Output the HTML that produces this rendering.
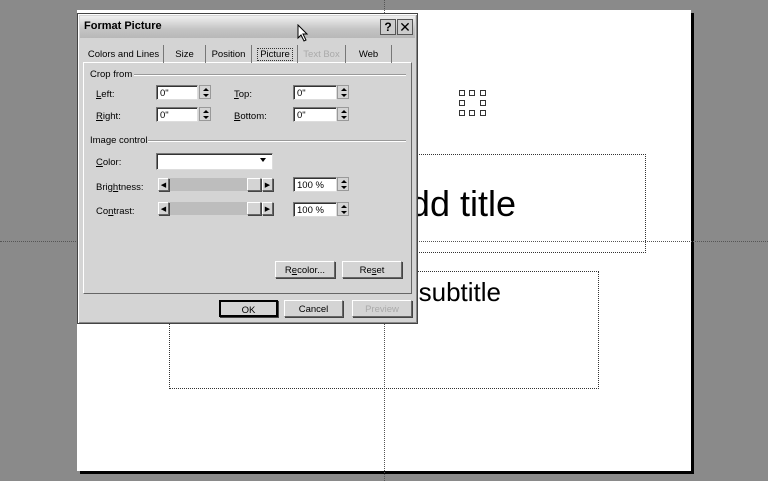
<!DOCTYPE html>
<html><head><style>
*{margin:0;padding:0;box-sizing:border-box}
body{width:768px;height:481px;background:#8a8a8a;position:relative;overflow:hidden;font-family:"Liberation Sans",sans-serif;font-size:9.5px;color:#000}
.a{position:absolute}
.hd{border-top:1px dotted #555}
.vd{border-left:1px dotted #555}
.box{border:1px dotted #333}
.h{position:absolute;width:6px;height:6px;border:1px solid #333;background:#fff}
.dlg{left:77px;top:13px;width:341px;height:311px;background:#d4d4d4;border:1px solid #444;box-shadow:inset 1px 1px #fff,inset -1px -1px #888}
.inp{background:#fff;border:1px solid #777;border-right-color:#ddd;border-bottom-color:#ddd;box-shadow:inset 1px 1px #333;height:15px;padding:2px 0 0 3px;font-size:9.5px}
.spin{width:12px;height:14px;background:#d4d4d4;border:1px solid #999}
.spin:before{content:"";position:absolute;left:3px;top:2px;border:3px solid transparent;border-bottom:3px solid #000;border-top:0}
.spin:after{content:"";position:absolute;left:3px;top:8px;border:3px solid transparent;border-top:3px solid #000;border-bottom:0}
.btn{background:#d4d4d4;border:1px solid #666;border-top-color:#fff;border-left-color:#fff;box-shadow:1px 1px #444;text-align:center;padding-top:3px;font-size:9.5px}
.tab{top:31px;height:18px;padding-top:4px;text-align:center;border-right:1px solid #777;font-size:9.5px}
</style></head><body>
<div class="a" style="left:80px;top:13px;width:614px;height:461px;background:#000"></div>
<div class="a" style="left:77px;top:10px;width:614px;height:461px;background:#fff"></div>
<div class="a hd" style="left:0;top:241px;width:768px"></div>
<div class="a vd" style="left:384px;top:0;height:481px"></div>
<div class="a box" style="left:385px;top:154px;width:261px;height:99px"></div>
<div class="a box" style="left:169px;top:271px;width:430px;height:118px"></div>
<div class="a" style="right:252px;top:183px;font-size:36px;line-height:42px;white-space:nowrap">Click to add title</div>
<div class="a" style="right:267px;top:277px;font-size:26px;line-height:30px;white-space:nowrap">Click to add subtitle</div>
<div class="h" style="left:459px;top:90px"></div><div class="h" style="left:469px;top:90px"></div><div class="h" style="left:480px;top:90px"></div>
<div class="h" style="left:459px;top:100px"></div><div class="h" style="left:480px;top:100px"></div>
<div class="h" style="left:459px;top:110px"></div><div class="h" style="left:469px;top:110px"></div><div class="h" style="left:480px;top:110px"></div>

<div class="a dlg">
 <div class="a" style="left:2px;top:2px;width:335px;height:22px;background:linear-gradient(#f0f0f0,#c4c4c4 60%,#b8b8b8)"></div>
 <div class="a" style="left:6px;top:6px;font-weight:bold;font-size:11px">Format Picture</div>
 <div class="a" style="left:302px;top:5px;width:16px;height:16px;background:#ccc;border:1px solid #555;text-align:center;font-weight:bold;font-size:12px;line-height:14px">?</div>
 <div class="a" style="left:319px;top:5px;width:16px;height:16px;background:#ccc;border:1px solid #555;text-align:center;font-size:14px;line-height:14px">✕</div>
 <div class="a" style="left:5px;top:48px;width:329px;height:232px;border:1px solid #fff;border-right-color:#666;border-bottom-color:#666"></div>
 <div class="a tab" style="left:6px;width:80px">Colors and Lines</div>
 <div class="a tab" style="left:86px;width:42px">Size</div>
 <div class="a tab" style="left:128px;width:46px">Position</div>
 <div class="a tab" style="left:175px;width:45px"><span style="border:1px dotted #333;padding:0 2px">Picture</span></div>
 <div class="a tab" style="left:220px;width:48px;color:#aaa">Text Box</div>
 <div class="a tab" style="left:268px;width:46px">Web</div>
 <div class="a" style="left:12px;top:55px">Crop from</div>
 <div class="a" style="left:56px;top:60px;width:272px;border-top:1px solid #999;border-bottom:1px solid #fff"></div>
 <div class="a" style="left:18px;top:75px"><u>L</u>eft:</div>
 <div class="a inp" style="left:78px;top:71px;width:42px">0"</div><div class="a spin" style="left:121px;top:71px"></div>
 <div class="a" style="left:156px;top:75px"><u>T</u>op:</div>
 <div class="a inp" style="left:215px;top:71px;width:44px">0"</div><div class="a spin" style="left:259px;top:71px"></div>
 <div class="a" style="left:18px;top:97px"><u>R</u>ight:</div>
 <div class="a inp" style="left:78px;top:93px;width:42px">0"</div><div class="a spin" style="left:121px;top:93px"></div>
 <div class="a" style="left:156px;top:97px"><u>B</u>ottom:</div>
 <div class="a inp" style="left:215px;top:93px;width:44px">0"</div><div class="a spin" style="left:259px;top:93px"></div>
 <div class="a" style="left:12px;top:121px">Image control</div>
 <div class="a" style="left:70px;top:126px;width:258px;border-top:1px solid #999;border-bottom:1px solid #fff"></div>
 <div class="a" style="left:18px;top:143px"><u>C</u>olor:</div>
 <div class="a inp" style="left:78px;top:139px;width:117px;height:17px"></div>
 <div class="a" style="left:182px;top:144px;border:3px solid transparent;border-top:4px solid #000"></div>
 <div class="a" style="left:18px;top:168px">Brig<u>h</u>tness:</div>
 <div class="a" style="left:80px;top:164px;width:116px;height:13px;background:#bdbdbd"></div>
 <div class="a btn" style="left:80px;top:164px;width:11px;height:13px;font-size:7px;padding-top:2px">◀</div>
 <div class="a btn" style="left:169px;top:164px;width:14px;height:13px"></div>
 <div class="a btn" style="left:184px;top:164px;width:11px;height:13px;font-size:7px;padding-top:2px">▶</div>
 <div class="a inp" style="left:215px;top:163px;width:44px">100 %</div><div class="a spin" style="left:259px;top:163px"></div>
 <div class="a" style="left:18px;top:192px">Co<u>n</u>trast:</div>
 <div class="a" style="left:80px;top:188px;width:116px;height:13px;background:#bdbdbd"></div>
 <div class="a btn" style="left:80px;top:188px;width:11px;height:13px;font-size:7px;padding-top:2px">◀</div>
 <div class="a btn" style="left:169px;top:188px;width:14px;height:13px"></div>
 <div class="a btn" style="left:184px;top:188px;width:11px;height:13px;font-size:7px;padding-top:2px">▶</div>
 <div class="a inp" style="left:215px;top:188px;width:44px">100 %</div><div class="a spin" style="left:259px;top:188px"></div>
 <div class="a btn" style="left:197px;top:247px;width:60px;height:17px">R<u>e</u>color...</div>
 <div class="a btn" style="left:264px;top:247px;width:60px;height:17px">Re<u>s</u>et</div>
 <div class="a btn" style="left:141px;top:286px;width:59px;height:17px;border:2px solid #000">OK</div>
 <div class="a btn" style="left:206px;top:286px;width:59px;height:17px">Cancel</div>
 <div class="a btn" style="left:274px;top:286px;width:60px;height:17px;color:#aaa">Preview</div>
</div>
<svg class="a" style="left:297px;top:24px" width="12" height="18" viewBox="0 0 12 18"><path d="M1 1 L1 14 L4 11 L7 17 L9 16 L6 10 L10 10 Z" fill="#fff" stroke="#000" stroke-width="1"/></svg>
</body></html>
